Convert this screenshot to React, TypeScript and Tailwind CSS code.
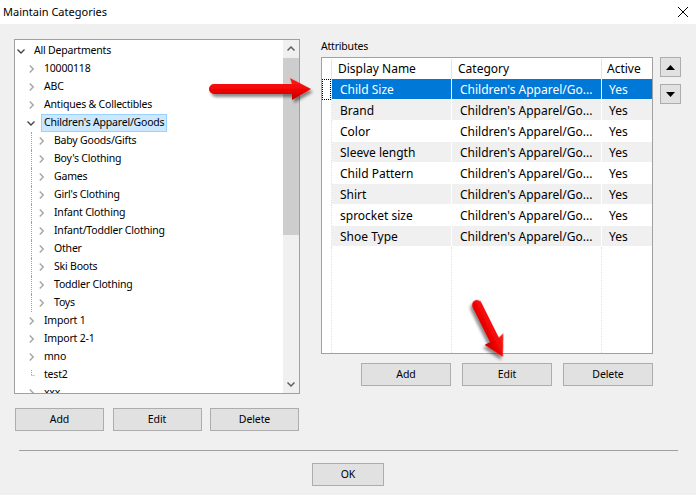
import React from "react";

type Node = {
  label: string;
  level: number;
  state: "open" | "closed" | "leaf";
  selected?: boolean;
  guide?: boolean;
};

const tree: Node[] = [
  { label: "All Departments", level: 0, state: "open" },
  { label: "10000118", level: 1, state: "closed" },
  { label: "ABC", level: 1, state: "closed" },
  { label: "Antiques & Collectibles", level: 1, state: "closed" },
  { label: "Children's Apparel/Goods", level: 1, state: "open", selected: true },
  { label: "Baby Goods/Gifts", level: 2, state: "closed", guide: true },
  { label: "Boy's Clothing", level: 2, state: "closed", guide: true },
  { label: "Games", level: 2, state: "closed", guide: true },
  { label: "Girl's Clothing", level: 2, state: "closed", guide: true },
  { label: "Infant Clothing", level: 2, state: "closed", guide: true },
  { label: "Infant/Toddler Clothing", level: 2, state: "closed", guide: true },
  { label: "Other", level: 2, state: "closed", guide: true },
  { label: "Ski Boots", level: 2, state: "closed", guide: true },
  { label: "Toddler Clothing", level: 2, state: "closed", guide: true },
  { label: "Toys", level: 2, state: "closed", guide: true },
  { label: "Import 1", level: 1, state: "closed" },
  { label: "Import 2-1", level: 1, state: "closed" },
  { label: "mno", level: 1, state: "closed" },
  { label: "test2", level: 1, state: "leaf" },
  { label: "xxx", level: 1, state: "closed" },
];

const attributes = [
  "Child Size",
  "Brand",
  "Color",
  "Sleeve length",
  "Child Pattern",
  "Shirt",
  "sprocket size",
  "Shoe Type",
];

function Chevron({ state }: { state: Node["state"] }) {
  if (state === "open")
    return (
      <svg width="8" height="5" viewBox="0 0 8 5">
        <path d="M0.5 0.5 L4 4 L7.5 0.5" stroke="#404040" strokeWidth="1.3" fill="none" />
      </svg>
    );
  if (state === "closed")
    return (
      <svg width="5" height="8" viewBox="0 0 5 8">
        <path d="M0.8 0.5 L4.2 4 L0.8 7.5" stroke="#a6a6a6" strokeWidth="1.4" fill="none" />
      </svg>
    );
  return (
    <svg width="8" height="18" viewBox="0 0 8 18">
      <path d="M4.5 4 V9.5 M4.5 9.5 H8" stroke="#a0a0a0" strokeWidth="1" strokeDasharray="1 1" fill="none" />
    </svg>
  );
}

function TreeRow({ node }: { node: Node }) {
  return (
    <div className="flex h-[18px] shrink-0 items-center pl-[2px]">
      {Array.from({ length: node.level }).map((_, i) => (
        <span key={i} className="h-full w-[10px] shrink-0">
          {node.guide && i === 1 && (
            <span className="ml-[4px] block h-full border-l border-dotted border-[#a0a0a0]" />
          )}
        </span>
      ))}
      <div className="flex h-full w-[8px] shrink-0 items-center justify-center">
        <Chevron state={node.state} />
      </div>
      <span
        className={`ml-[6px] flex h-[18px] items-center whitespace-nowrap border px-[2px] ${
          node.selected ? "border-[#99d1ff] bg-[#cce8ff]" : "border-transparent"
        }`}
      >
        {node.label}
      </span>
    </div>
  );
}

function Button({ label, className }: { label: string; className: string }) {
  return (
    <div
      className={`flex h-[23px] items-center justify-center border border-[#adadad] bg-[#e1e1e1] text-[10.5px] tracking-[-0.1px] text-black ${className}`}
    >
      {label}
    </div>
  );
}

function Arrow({ x, y, angle, len }: { x: number; y: number; angle: number; len: number }) {
  const L = len;
  const d = `M0,-5 L${L - 19},-5 L${L - 21},-11 L${L},0 L${L - 19},11 L${L - 19},5 L0,5 A5,5 0 0 1 0,-5 Z`;
  return (
    <g transform={`translate(${x} ${y}) rotate(${angle})`} filter="url(#shadow)">
      <path d={d} fill="url(#red)" />
    </g>
  );
}

export default function App() {
  return (
    <div
      className="relative flex h-[495px] w-[696px] flex-col overflow-hidden bg-[#f0f0f0] text-[12px] text-black"
      style={{ fontFamily: '"Segoe UI", "Noto Sans", sans-serif' }}
    >
      {/* title bar */}
      <div className="flex h-[24px] shrink-0 items-center justify-between bg-white pl-[3px] pr-[8px] text-[11px]">
        <span>Maintain Categories</span>
        <svg width="10" height="10" viewBox="0 0 10 10">
          <path d="M0 0 L10 10 M10 0 L0 10" stroke="#000" strokeWidth="1" />
        </svg>
      </div>

      <div className="flex pl-[14px]">
        {/* category tree */}
        <div className="mt-[15px] flex w-[286px] flex-col">
          <div className="flex h-[355px] border border-[#a0a0a0] bg-white text-[10.5px] tracking-[-0.2px]">
            <div className="flex flex-1 flex-col overflow-hidden pt-[2px]">
              {tree.map((n) => (
                <TreeRow key={n.label} node={n} />
              ))}
            </div>
            <div className="flex w-[16px] flex-col bg-[#f0f0f0]">
              <div className="flex h-[17px] items-center justify-center">
                <svg width="8" height="5" viewBox="0 0 8 5">
                  <path d="M0.5 4.5 L4 1 L7.5 4.5" stroke="#606060" strokeWidth="1.5" fill="none" />
                </svg>
              </div>
              <div className="mt-[1px] h-[177px] bg-[#cdcdcd]" />
              <div className="flex-1" />
              <div className="flex h-[17px] items-center justify-center">
                <svg width="8" height="5" viewBox="0 0 8 5">
                  <path d="M0.5 0.5 L4 4 L7.5 0.5" stroke="#606060" strokeWidth="1.5" fill="none" />
                </svg>
              </div>
            </div>
          </div>
          <div className="mt-[14px] flex justify-between px-[1px]">
            <Button label="Add" className="w-[89px]" />
            <Button label="Edit" className="w-[89px]" />
            <Button label="Delete" className="w-[89px]" />
          </div>
        </div>

        {/* attributes */}
        <div className="ml-[21px] mt-[15px] flex w-[332px] flex-col">
          <div className="h-[14px] text-[10.5px] leading-[14px] tracking-[-0.2px]">Attributes</div>
          <div className="mt-[4px] flex h-[297px] flex-col border border-[#a0a0a0] bg-white">
            <div className="flex h-[21px] shrink-0 pt-[1px]">
              <div className="w-[10px] border-r border-[#e5e5e5]" />
              <div className="flex w-[120px] items-center border-r border-[#e5e5e5] pl-[6px]">Display Name</div>
              <div className="flex w-[150px] items-center border-r border-[#e5e5e5] pl-[6px]">Category</div>
              <div className="flex w-[50px] items-center pl-[5px]">Active</div>
            </div>
            {attributes.map((a, i) => {
              const sel = i === 0;
              const bg = sel ? "bg-[#0078d7] text-white" : i % 2 === 1 ? "bg-[#f0f0f0]" : "bg-white";
              return (
                <div key={a} className="flex h-[21px] shrink-0">
                  <div className="w-[10px] border-r border-dotted border-[#e3e3e3]">
                    {sel && <div className="h-full w-full border border-dotted border-black" />}
                  </div>
                  <div className={`flex w-[120px] items-center border-r border-b border-white pl-[8px] pt-[1px] ${bg}`}>{a}</div>
                  <div className={`flex w-[150px] items-center border-r border-b border-white pl-[8px] pt-[1px] whitespace-nowrap ${bg}`}>
                    Children's Apparel/Go...
                  </div>
                  <div className={`flex w-[50px] items-center border-b border-white pl-[7px] pt-[1px] ${bg}`}>Yes</div>
                </div>
              );
            })}
            <div className="flex flex-1">
              <div className="w-[10px] border-r border-dotted border-[#e3e3e3]" />
              <div className="w-[120px] border-r border-dotted border-[#e3e3e3]" />
              <div className="w-[150px] border-r border-dotted border-[#e3e3e3]" />
              <div className="w-[50px]" />
            </div>
          </div>
          <div className="mt-[9px] flex justify-end gap-[11px]">
            <Button label="Add" className="w-[90px]" />
            <Button label="Edit" className="w-[90px]" />
            <Button label="Delete" className="w-[90px]" />
          </div>
        </div>

        {/* move up / down */}
        <div className="ml-[7px] flex flex-col pt-[33px]">
          <div className="flex h-[20px] w-[21px] items-center justify-center border border-[#adadad] bg-[#e1e1e1]">
            <svg width="9" height="5" viewBox="0 0 9 5">
              <path d="M0 5 L4.5 0 L9 5 Z" fill="#000" />
            </svg>
          </div>
          <div className="mt-[7px] flex h-[20px] w-[21px] items-center justify-center border border-[#adadad] bg-[#e1e1e1]">
            <svg width="9" height="5" viewBox="0 0 9 5">
              <path d="M0 0 L9 0 L4.5 5 Z" fill="#000" />
            </svg>
          </div>
        </div>
      </div>

      <div className="ml-[19px] mr-[18px] mt-[19px] h-px bg-[#a0a0a0]" />
      <div className="mt-[12px] flex justify-center">
        <Button label="OK" className="w-[72px]" />
      </div>

      {/* annotation arrows */}
      <svg className="pointer-events-none absolute left-0 top-0" width="696" height="495">
        <defs>
          <linearGradient id="red" x1="0" y1="0" x2="0" y2="1">
            <stop offset="0" stopColor="#ff2020" />
            <stop offset="0.6" stopColor="#ee0000" />
            <stop offset="1" stopColor="#b80000" />
          </linearGradient>
          <filter id="shadow" x="-20%" y="-40%" width="140%" height="180%">
            <feDropShadow dx="2" dy="3" stdDeviation="1.5" floodColor="#000" floodOpacity="0.45" />
          </filter>
        </defs>
        <Arrow x={214} y={89} angle={0} len={97} />
        <Arrow x={477} y={305} angle={63.5} len={58} />
      </svg>
    </div>
  );
}
